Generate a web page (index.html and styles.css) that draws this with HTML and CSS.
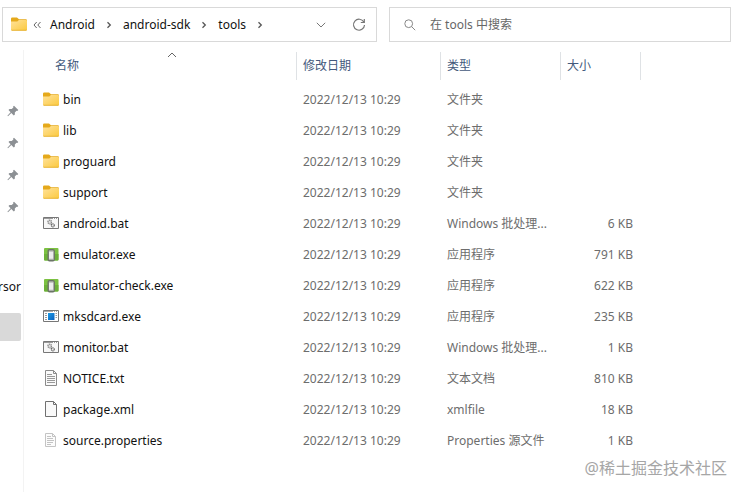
FILE: index.html
```html
<!DOCTYPE html>
<html lang="zh-CN">
<head>
<meta charset="utf-8">
<meta name="viewport" content="width=device-width, initial-scale=1">
<title>tools</title>
<link rel="stylesheet" href="styles.css">
</head>
<body>
<svg class="defs" aria-hidden="true">
  <defs>
    <linearGradient id="gold" x1="0" y1="0" x2="1" y2="1">
      <stop offset="0" stop-color="#ffe29a"/><stop offset="1" stop-color="#fbc93f"/>
    </linearGradient>
    <linearGradient id="blue" x1="0" y1="0" x2="1" y2="1">
      <stop offset="0" stop-color="#1a9be6"/><stop offset="1" stop-color="#0a5fbe"/>
    </linearGradient>
    <symbol id="folder" viewBox="0 0 16 16">
      <path d="M0 2.700Q0 1.500 1.200 1.500H6l2 1.800h6.800Q16 3.300 16 4.500v4H0z" fill="#e5a91b"/>
      <path d="M0 5.500h6.300l1.600-1.400h7.200q.9 0 .9.9v8.500q0 1-1 1H1q-1 0-1-1z" fill="url(#gold)"/>
      <path d="M.2 13.800q.3.500.8.500h14q.6 0 .8-.5" fill="none" stroke="#e3a923" stroke-width=".8"/>
    </symbol>
    <symbol id="bat" viewBox="0 0 16 16">
      <path d="M.5 2.500h15v11H.5z" fill="#f7f7f7" stroke="#777"/>
      <path d="M1 3.500h14" stroke="#999"/>
      <path d="M10 3.500h1m1 0h1m1 0h1" stroke="#fff"/>
      <circle cx="6.700" cy="7" r="1.800" fill="#ddd" stroke="#888" stroke-width="1.300" stroke-dasharray="1.200 .5"/>
      <circle cx="9.800" cy="10.300" r="1.500" fill="#eee" stroke="#666" stroke-width="1.200" stroke-dasharray="1.100 .4"/>
    </symbol>
    <symbol id="emulator" viewBox="0 0 16 16">
      <rect x="1" y="2" width="14.500" height="12.500" rx="1" fill="#7cc142"/>
      <path d="M1 8h14.500v5.500q0 1-1 1H2q-1 0-1-1z" fill="#6cb038"/>
      <rect x="5.200" y="3.700" width="6" height="11" rx="1.200" fill="#ececec" stroke="#6b7367" stroke-width="1.400"/>
      <path d="M6 5h4.500M6 13.300h4.500" stroke="#8b9287" stroke-width=".8"/>
    </symbol>
    <symbol id="exe" viewBox="0 0 16 16">
      <path d="M.5 2.500h15v11H.5z" fill="#fff" stroke="#777"/>
      <path d="M1 3.500h14" stroke="#aaa"/>
      <path d="M10 3.500h1m1 0h1m1 0h1" stroke="#fff"/>
      <path d="M5 5h6.500v7H5z" fill="url(#blue)"/>
      <path d="M2 5.500h2m-2 2h2m-2 2h2m-2 2h2m8.500-6h1.500m-1.500 2h1.500m-1.500 2h1.500" stroke="#999"/>
    </symbol>
    <symbol id="text" viewBox="0 0 16 16">
      <path d="M2.500.5h8l3 3v12h-11z" fill="#fafafa" stroke="#8b8b8b"/>
      <path d="M10.500.5v3h3" fill="none" stroke="#8b8b8b"/>
      <path d="M4 4.500h5m-5 2h8m-8 2h8m-8 2h8m-8 2h8" stroke="#999"/>
    </symbol>
    <symbol id="blank" viewBox="0 0 16 16">
      <path d="M2.500.5h8l3 3v12h-11z" fill="#f9f9f9" stroke="#707070"/>
      <path d="M10.500.5v3h3" fill="none" stroke="#707070"/>
    </symbol>
    <symbol id="props" viewBox="0 0 16 16">
      <path d="M2.500 1.500h7l3 3v10h-10z" fill="#fcfcfc" stroke="#c4c4c4"/>
      <path d="M9.500 1.500v3h3" fill="none" stroke="#c4c4c4"/>
      <path d="M4 4.500h4m-4 2h6m-6 2h7m-7 2h6m-6 2h4" stroke="#b4b4b4" stroke-width=".8"/>
    </symbol>
    <symbol id="pin" viewBox="0 0 12 12">
      <path d="M7 .8 11.300 5l-1 .9-.8-.2-1.700 1.700.1 2-1.100 1.100-2.500-2.400L1 11.300l-.6-.6 3.200-3.500L1.500 5l1-1 2.200.1L6.400 2.400 6.100 1.600z" fill="#8c9094"/>
    </symbol>
    <symbol id="next" viewBox="0 0 8 8">
      <path d="M2.500 1.200 5.300 4 2.500 6.800" fill="none" stroke="#555" stroke-width="1.300"/>
    </symbol>
  </defs>
</svg>

<header class="toolbar">
  <nav class="address" aria-label="路径">
    <svg class="icon"><use href="#folder"/></svg>
    <button class="overflow" type="button" aria-label="更多">
      <svg width="8" height="8" viewBox="0 0 8 8"><path d="M3.700 1 1 4l2.700 3M7.500 1 4.800 4l2.700 3" fill="none" stroke="#666"/></svg>
    </button>
    <a href="#">Android</a>
    <svg class="next"><use href="#next"/></svg>
    <a href="#">android-sdk</a>
    <svg class="next"><use href="#next"/></svg>
    <a href="#">tools</a>
    <svg class="next"><use href="#next"/></svg>
    <span class="actions">
      <button type="button" aria-label="历史">
        <svg width="10" height="6" viewBox="0 0 10 6"><path d="M.8.8 5 5 9.200.8" fill="none" stroke="#777"/></svg>
      </button>
      <button type="button" aria-label="刷新">
        <svg width="14" height="14" viewBox="0 0 14 14"><path d="M11.800 4A5.500 5.500 0 1 0 12.500 7M12.300 1v3.500H8.800" fill="none" stroke="#777" stroke-width="1.200"/></svg>
      </button>
    </span>
  </nav>
  <label class="search">
    <svg width="12" height="12" viewBox="0 0 12 12"><circle cx="4.700" cy="4.700" r="3.900" fill="none" stroke="#888"/><path d="m7.500 7.500 3.700 3.700" stroke="#888"/></svg>
    <input type="search" aria-label="搜索" placeholder="在 tools 中搜索">
  </label>
</header>

<div class="panes">
  <aside class="sidebar">
    <ul class="pins">
      <li><svg class="pin"><use href="#pin"/></svg></li>
      <li><svg class="pin"><use href="#pin"/></svg></li>
      <li><svg class="pin"><use href="#pin"/></svg></li>
      <li><svg class="pin"><use href="#pin"/></svg></li>
    </ul>
    <div class="place">rsor</div>
    <div class="selected"></div>
  </aside>

  <main class="content">
    <table class="files">
      <colgroup><col class="c-name"><col class="c-date"><col class="c-type"><col class="c-size"><col></colgroup>
      <thead>
        <tr>
          <th scope="col" aria-sort="ascending"><div class="head first">名称
            <svg class="sort" width="10" height="6" viewBox="0 0 10 6"><path d="M1 5 5 1l4 4" fill="none" stroke="#666"/></svg></div></th>
          <th scope="col"><div class="head">修改日期</div></th>
          <th scope="col"><div class="head">类型</div></th>
          <th scope="col"><div class="head">大小</div></th>
          <td></td>
        </tr>
      </thead>
      <tbody>
        <tr><td><div class="name"><svg class="icon"><use href="#folder"/></svg>bin</div></td><td>2022/12/13 10:29</td><td>文件夹</td><td></td><td></td></tr>
        <tr><td><div class="name"><svg class="icon"><use href="#folder"/></svg>lib</div></td><td>2022/12/13 10:29</td><td>文件夹</td><td></td><td></td></tr>
        <tr><td><div class="name"><svg class="icon"><use href="#folder"/></svg>proguard</div></td><td>2022/12/13 10:29</td><td>文件夹</td><td></td><td></td></tr>
        <tr><td><div class="name"><svg class="icon"><use href="#folder"/></svg>support</div></td><td>2022/12/13 10:29</td><td>文件夹</td><td></td><td></td></tr>
        <tr><td><div class="name"><svg class="icon"><use href="#bat"/></svg>android.bat</div></td><td>2022/12/13 10:29</td><td>Windows 批处理...</td><td class="size">6 KB</td><td></td></tr>
        <tr><td><div class="name"><svg class="icon"><use href="#emulator"/></svg>emulator.exe</div></td><td>2022/12/13 10:29</td><td>应用程序</td><td class="size">791 KB</td><td></td></tr>
        <tr><td><div class="name"><svg class="icon"><use href="#emulator"/></svg>emulator-check.exe</div></td><td>2022/12/13 10:29</td><td>应用程序</td><td class="size">622 KB</td><td></td></tr>
        <tr><td><div class="name"><svg class="icon"><use href="#exe"/></svg>mksdcard.exe</div></td><td>2022/12/13 10:29</td><td>应用程序</td><td class="size">235 KB</td><td></td></tr>
        <tr><td><div class="name"><svg class="icon"><use href="#bat"/></svg>monitor.bat</div></td><td>2022/12/13 10:29</td><td>Windows 批处理...</td><td class="size">1 KB</td><td></td></tr>
        <tr><td><div class="name"><svg class="icon"><use href="#text"/></svg>NOTICE.txt</div></td><td>2022/12/13 10:29</td><td>文本文档</td><td class="size">810 KB</td><td></td></tr>
        <tr><td><div class="name"><svg class="icon"><use href="#blank"/></svg>package.xml</div></td><td>2022/12/13 10:29</td><td>xmlfile</td><td class="size">18 KB</td><td></td></tr>
        <tr><td><div class="name"><svg class="icon"><use href="#props"/></svg>source.properties</div></td><td>2022/12/13 10:29</td><td>Properties 源文件</td><td class="size">1 KB</td><td></td></tr>
      </tbody>
    </table>
  </main>
</div>
<div class="watermark">@稀土掘金技术社区</div>
</body>
</html>
```
FILE: styles.css
```css
* { box-sizing: border-box; }

body {
  margin: 0;
  min-height: 100vh;
  display: flex;
  flex-direction: column;
  position: relative;
  background: #fff;
  color: #111;
  font: 12px/16px "Noto Sans", "Noto Sans CJK SC", sans-serif;
}

svg { display: block; flex: none; }
.defs { position: absolute; width: 0; height: 0; }
.icon { width: 16px; height: 16px; margin-bottom: 2px; }

button {
  border: 0;
  padding: 0;
  background: none;
  color: #555;
  font: inherit;
}

.toolbar {
  display: grid;
  grid-template-columns: 375fr 342fr;
  gap: 12px;
  padding: 7px 12px 0 2px;
}

.address,
.search {
  display: flex;
  align-items: center;
  min-width: 0;
  height: 35px;
  border: 1px solid #d9d9d9;
}

.address { padding: 0 10px 0 8px; }
.address a { color: #111; text-decoration: none; }
.overflow { width: 23px; padding-left: 6px; }
.next { width: 8px; height: 8px; margin: 0 10px; }

.actions {
  display: flex;
  gap: 26px;
  margin-left: auto;
}
.actions button { display: flex; align-items: center; }

.search { gap: 14px; padding: 0 14px; }
.search input {
  flex: 1;
  min-width: 0;
  border: 0;
  padding: 0;
  outline: 0;
  background: none;
  font: inherit;
}
.search input::placeholder { color: #666; opacity: 1; }

.panes { flex: 1; display: flex; padding-top: 8px; }

.sidebar {
  width: 24px;
  border-right: 1px solid #f3f3f3;
  padding: 45px 2px 0 0;
}
.pins { margin: 0; padding: 0 0 0 7px; list-style: none; }
.pins li { display: flex; align-items: center; height: 32px; }
.pin { width: 12px; height: 12px; }
.place {
  display: flex;
  justify-content: flex-end;
  margin-top: 56px;
}
.selected {
  height: 28px;
  margin-top: 18px;
  border-radius: 0 2px 2px 0;
  background: #d9d9d9;
}

.content { flex: 1; min-width: 0; padding-left: 19px; }

.files {
  width: 100%;
  table-layout: fixed;
  border-collapse: collapse;
}
.c-name { width: 254px; }
.c-date { width: 144px; }
.c-type { width: 120px; }
.c-size { width: 80px; }

th { height: 34px; padding: 2px 0 4px; font-weight: 400; text-align: left; }
.head {
  position: relative;
  height: 28px;
  border-right: 1px solid #dfe2e5;
  padding: 6px 0 0 6px;
  color: #43597c;
}
.head.first { padding-left: 12px; }
.sort { position: absolute; top: 0; left: 49%; }

tbody td {
  height: 31px;
  padding: 0 0 0 6px;
  color: #6d6d6d;
  white-space: nowrap;
}
tbody td:first-child { padding: 0; color: #111; }
tbody .size { padding: 0 8px 0 0; text-align: right; }
.name { display: flex; align-items: center; gap: 4px; }

.watermark {
  position: absolute;
  right: 16px;
  bottom: 12px;
  color: #a6a6a6;
  font-size: 16px;
  line-height: 24px;
}
```
